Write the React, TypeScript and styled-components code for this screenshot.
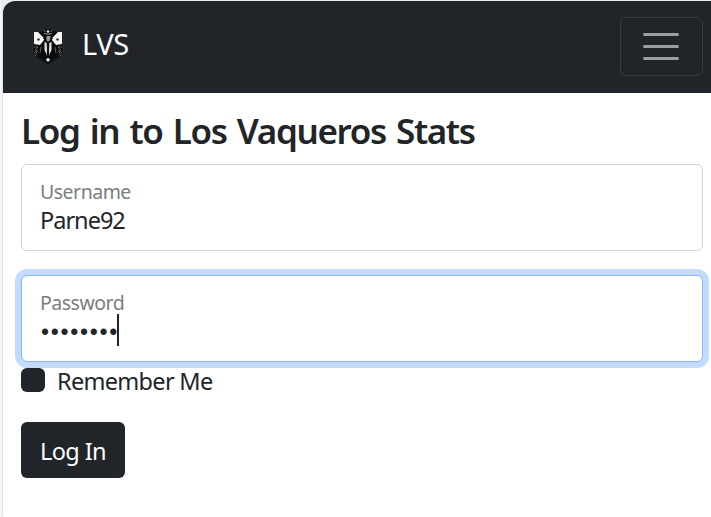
import React from 'react';
import styled, { createGlobalStyle } from 'styled-components';

const GlobalStyle = createGlobalStyle`
  * { box-sizing: border-box; }
  body { margin: 0; background: #f1f3f3; overflow: hidden; }
`;

const Page = styled.div`
  height: 517px;
  padding: 1px 0 0 3px;
  background: linear-gradient(to right, #f5f5f5 0, #f3f3f3 2px, #e2e2e2 2px, #e2e2e2 3px, #e9eeee 3px);
  font-family: 'Noto Sans', sans-serif;
  color: #212529;
`;

const Panel = styled.div`
  height: 516px;
  background: #fff;
  border-top-left-radius: 12px;
  overflow: hidden;
`;

const Navbar = styled.header`
  height: 92px;
  padding: 0 8px 2px 27px;
  display: flex;
  align-items: center;
  justify-content: space-between;
  background: #212529;
`;

const Brand = styled.div`
  display: flex;
  align-items: center;
  gap: 15px;
`;

const Text = styled.span<{ $size: number; $spacing?: number; $weight?: number; $line?: number; $word?: number }>`
  display: block;
  white-space: nowrap;
  font-size: ${(p) => p.$size}px;
  line-height: ${(p) => p.$line ?? 36}px;
  font-weight: ${(p) => p.$weight ?? 400};
  letter-spacing: ${(p) => p.$spacing ?? 0}px;
  word-spacing: ${(p) => p.$word ?? 0}px;
`;

const BrandName = styled(Text)`
  color: #fff;
  margin-top: -4px;
`;

const Toggler = styled.button`
  width: 83px;
  height: 59px;
  padding: 0 1px 0 0;
  display: grid;
  place-items: center;
  background: transparent;
  border: 1px solid #373b3e;
  border-radius: 6px;
`;

const Content = styled.main`
  padding: 16px 8px 0 18px;
`;

const Title = styled(Text).attrs({ as: 'h1' })`
  margin: 0 0 12px;
`;

const Field = styled.div<{ $focused?: boolean }>`
  height: 87px;
  padding: 13px 18px 0;
  margin-bottom: 24px;
  background: #fff;
  border: 1px solid ${(p) => (p.$focused ? '#86b7fe' : '#ced4da')};
  border-radius: 6px;
  box-shadow: ${(p) => (p.$focused ? '0 0 0 6px #c2dbfe' : 'none')};
  & + & { margin-bottom: 0; }
`;

const Label = styled(Text)`
  color: #7b7d7f;
`;

const PasswordValue = styled.div`
  display: flex;
  align-items: center;
  height: 32px;
  margin-top: -3px;
`;

const Dots = styled(Text)`
  font-family: 'Liberation Sans', sans-serif;
  width: 77px;
  padding: 3px 0 0 1px;
`;

const Caret = styled.span`
  width: 2px;
  height: 32px;
  background: #212529;
`;

const CheckRow = styled.label`
  display: flex;
  align-items: flex-start;
  gap: 12px;
  height: 36px;
  margin: 0 0 24px;
`;

const Checkbox = styled.span`
  width: 24px;
  height: 24px;
  margin-top: 6px;
  background: #212529;
  border-radius: 6px;
`;

const Submit = styled.button`
  display: flex;
  align-items: center;
  justify-content: center;
  width: 104px;
  height: 56px;
  padding: 2px 0 0;
  border: 0;
  border-radius: 6px;
  background: #212529;
  color: #fff;
  font-family: inherit;
`;

const CrestIcon = styled.svg`
  display: block;
  margin-top: 4px;
`;

const Crest = () => (
  <CrestIcon width="37" height="40" viewBox="0 0 37 40">
    <path d="M3 4 L11 3 L18 .5 L26 3 L33 4 V25 Q30 32 18 38.5 Q6 32 3 25Z" fill="#0c0d0f" stroke="#34383b" strokeWidth=".7" />
    <path d="M4 4 L8 4 L13 9 L14 12 L10 17 L4 16Z M32 4 L28 4 L23 9 L22 12 L26 17 L32 16Z" fill="#f5f5f5" />
    <circle cx="8.5" cy="11.5" r="1.2" fill="#24282b" />
    <circle cx="27.5" cy="11.5" r="1.2" fill="#24282b" />
    <path d="M9 3 Q12 5 14 4 L15 1 H21 L22 4 Q24 5 27 3 Q25 8 21 8.5 H15 Q11 8 9 3Z" fill="#090a0b" />
    <path d="M14 3h1.5M20.5 3H22M14 5.5 Q18 7 22 5.5" stroke="#999" fill="none" />
    <circle cx="18" cy="3.5" r="1.3" fill="#ddd" />
    <path d="M16.5 8 H20.5 L20 12 L18 14 L16.5 12Z" fill="#999" />
    <path d="M14.5 14 L16.7 15 L17.2 28 L14.5 22Z M21.5 14 L19.3 15 L18.8 28 L21.5 22Z" fill="#e2e2e2" />
    <path d="M16.8 14 H19.2 L18.6 17 L19.3 26 L18 28 L16.7 26 L17.4 17Z" fill="#111" />
    <path d="M4 19 L8 19 L5 22 M4 25 L7 22 L5.5 28 M11 19 L10 25 M32 19 L28 19 L31 22 M32 25 L29 22 L30.5 28 M25 19 L26 25" stroke="#77797b" strokeWidth=".8" fill="none" />
    <path d="M9 30 L13 34 L18 37 L23 34 L27 30" stroke="#444" strokeWidth=".7" fill="none" />
    <path d="M18 29.5 L19 31 L20.3 31.7 L19 32.7 L18 34 L17 32.7 L15.7 31.7 L17 31Z" fill="#fff" />
  </CrestIcon>
);

export default function App() {
  return (
    <>
      <GlobalStyle />
      <Page>
        <Panel>
          <Navbar>
            <Brand>
              <Crest />
              <BrandName $size={29} $spacing={-0.4}>LVS</BrandName>
            </Brand>
            <Toggler aria-label="Toggle navigation">
              <svg width="38" height="30" viewBox="0 0 38 30" stroke="#9b9d9e" strokeWidth="3" strokeLinecap="round">
                <path d="M2.5 3.5h33M2.5 15.5h33M2.5 27.5h33" />
              </svg>
            </Toggler>
          </Navbar>
          <Content>
            <Title $size={35} $weight={600} $spacing={-1.35} $word={2.4} $line={43}>Log in to Los Vaqueros Stats</Title>
            <Field>
              <Label $size={19.5} $spacing={-0.5} $line={28}>Username</Label>
              <Text $size={23.5} $spacing={-1} $line={29}>Parne92</Text>
            </Field>
            <Field $focused>
              <Label $size={19.5} $spacing={-0.5} $line={28}>Password</Label>
              <PasswordValue>
                <Dots $size={23} $spacing={1.68}>••••••••</Dots>
                <Caret />
              </PasswordValue>
            </Field>
            <CheckRow>
              <Checkbox role="checkbox" aria-checked="false" />
              <Text $size={23.5} $spacing={-0.7} $line={39}>Remember Me</Text>
            </CheckRow>
            <Submit>
              <Text $size={23.5} $spacing={-0.6}>Log In</Text>
            </Submit>
          </Content>
        </Panel>
      </Page>
    </>
  );
}
